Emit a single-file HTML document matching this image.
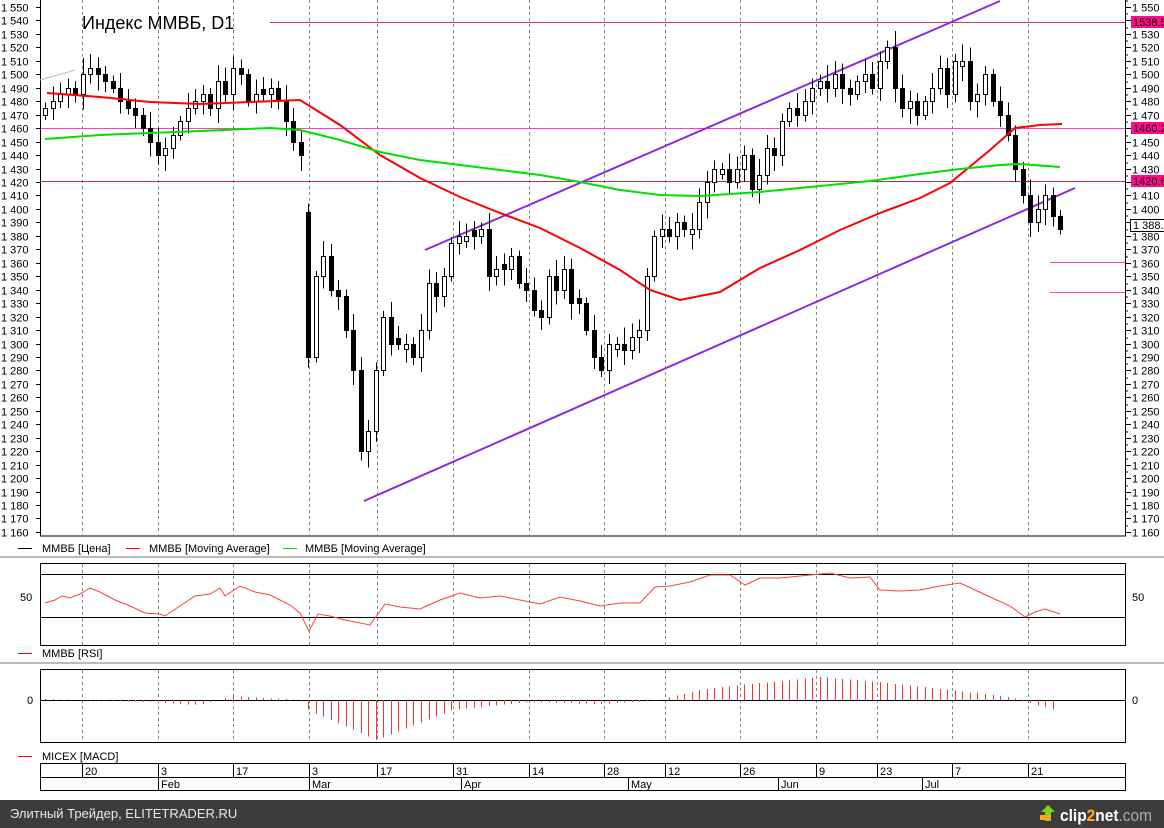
<!DOCTYPE html>
<html><head><meta charset="utf-8">
<style>
html,body{margin:0;padding:0;background:#fff;width:1164px;height:828px;overflow:hidden;font-family:"Liberation Sans",sans-serif}
svg text{font-family:"Liberation Sans","DejaVu Sans",sans-serif}
</style></head>
<body>
<svg id="s" width="1164" height="828" xmlns="http://www.w3.org/2000/svg" shape-rendering="crispEdges">
<rect width="1164" height="828" fill="#fff"/>
<rect x="40.5" y="-1" width="1085" height="537" fill="none" stroke="#000"/>
<g id="grid" stroke="#888" stroke-dasharray="3,3"></g>
<g id="axes" font-size="11" fill="#000"></g>
<line x1="270" y1="22.5" x2="1125" y2="22.5" stroke="#d0306a"/>
<line x1="41" y1="128.5" x2="1125" y2="128.5" stroke="#ff3ec0"/>
<line x1="41" y1="181.5" x2="1125" y2="181.5" stroke="#b03050"/>
<line x1="1050" y1="262.5" x2="1125" y2="262.5" stroke="#ff3ec0"/>
<line x1="1050" y1="292.5" x2="1125" y2="292.5" stroke="#ff3ec0"/>
<line x1="40" y1="80" x2="75" y2="70" stroke="#bbb" shape-rendering="auto"/>
<text x="82" y="29" font-size="18" fill="#000">Индекс ММВБ, D1</text>
<g stroke="#8a2be2" stroke-width="2" shape-rendering="auto">
<line x1="425" y1="250" x2="1000" y2="1"/>
<line x1="364" y1="501" x2="1075" y2="188"/>
</g>
<g id="candles"></g>
<polyline fill="none" stroke="#ff0000" stroke-width="2" shape-rendering="auto" points="47,93 100,97 150,102 200,104 250,102 300,100 340,125 380,155 420,178 460,197 500,213 540,228 580,248 620,270 650,290 680,300 720,292 760,268 800,250 840,230 880,213 920,198 950,183 990,150 1015,128 1040,125 1062,124"/>
<polyline fill="none" stroke="#00e000" stroke-width="2" shape-rendering="auto" points="45,139 100,135 150,133 200,131 270,128 300,130 340,140 380,152 420,160 460,165 500,170 540,175 580,182 620,190 660,195 700,196 760,192 820,186 870,181 920,174 960,169 1000,165 1020,164 1060,167"/>
<rect x="1131" y="16" width="33" height="12" fill="#ff0a8c"/><text x="1133" y="26" font-size="11">1538.5</text>
<rect x="1131" y="122" width="33" height="12" fill="#ff0a8c"/><text x="1133" y="132" font-size="11">1460.2</text>
<rect x="1131" y="175" width="33" height="12" fill="#ff0a8c"/><text x="1133" y="185" font-size="11">1420.6</text>
<rect x="1130.5" y="219.5" width="34" height="12" fill="#fff" stroke="#000"/><text x="1133" y="229" font-size="11">1 388.4</text>
<g font-size="11">
<line x1="18" y1="548.5" x2="32" y2="548.5" stroke="#000"/><text x="42" y="552">ММВБ [Цена]</text>
<line x1="126" y1="548.5" x2="140" y2="548.5" stroke="#f00"/><text x="149" y="552">ММВБ [Moving Average]</text>
<line x1="283" y1="548.5" x2="297" y2="548.5" stroke="#0d0"/><text x="305" y="552">ММВБ [Moving Average]</text>
</g>
<rect x="0" y="556" width="1164" height="2" fill="#bbb"/>
<rect x="40.5" y="563.5" width="1085" height="82" fill="none" stroke="#000"/>
<line x1="41" y1="574.5" x2="1125" y2="574.5" stroke="#000"/>
<line x1="41" y1="617.5" x2="1125" y2="617.5" stroke="#000"/>
<g id="grid2" stroke="#888" stroke-dasharray="3,3"></g>
<text x="20" y="601" font-size="11">50</text><text x="1132" y="601" font-size="11">50</text>
<polyline fill="none" stroke="#ff4040" stroke-width="1" shape-rendering="auto" points="45,603 55,600 62,596 70,598 80,594 90,588 100,592 115,600 130,606 145,613 160,614 165,616 180,606 195,596 210,594 220,588 225,596 240,586 255,592 270,595 290,605 300,613 309,631 318,614 330,616 345,620 370,625 385,604 400,607 420,609 440,600 460,593 480,598 500,596 520,600 540,604 560,597 580,601 600,606 620,603 640,603 655,587 670,586 690,582 710,575 730,575 745,585 760,578 780,578 800,576 830,573 850,578 870,577 880,590 900,591 920,590 940,586 960,583 975,590 990,597 1010,606 1025,617 1035,612 1045,609 1060,614"/>
<line x1="18" y1="653.5" x2="32" y2="653.5" stroke="#f00"/><text x="42" y="657" font-size="11">ММВБ [RSI]</text>
<rect x="0" y="662" width="1164" height="2" fill="#bbb"/>
<rect x="40.5" y="669.5" width="1085" height="73" fill="none" stroke="#000"/>
<g id="grid3" stroke="#888" stroke-dasharray="3,3"></g>
<line x1="41" y1="700.5" x2="1125" y2="700.5" stroke="#000"/>
<g id="macd" stroke="#ff3030"></g>
<text x="27" y="704" font-size="11">0</text><text x="1132" y="704" font-size="11">0</text>
<line x1="18" y1="756.5" x2="32" y2="756.5" stroke="#f00"/><text x="42" y="760" font-size="11">MICEX [MACD]</text>
<rect x="40.5" y="763.5" width="1085" height="27" fill="none" stroke="#000"/>
<line x1="41" y1="777.5" x2="1125" y2="777.5" stroke="#000"/>
<g id="dates" font-size="11"></g>
<rect x="0" y="800" width="1164" height="28" fill="#3c3c3c"/>
<text x="10" y="818" font-size="13" fill="#e8e8e8">Элитный Трейдер, ELITETRADER.RU</text>
<g shape-rendering="auto">
<polygon points="1048,805 1041,812 1045,812 1045,821 1051,821 1051,812 1055,812" fill="#7ed321"/>
<rect x="1040" y="815" width="11" height="5" fill="#f5a623"/>
<text x="1060" y="821" font-size="17" font-weight="bold" fill="#fff" textLength="92" lengthAdjust="spacingAndGlyphs">clip<tspan fill="#ffb020">2</tspan>net<tspan fill="#aaa" font-weight="normal">.com</tspan></text>
</g>
</svg>
<script>
var NS="http://www.w3.org/2000/svg";
function el(p,t,a,txt){var e=document.createElementNS(NS,t);for(var k in a)e.setAttribute(k,a[k]);if(txt!=null)e.textContent=txt;document.getElementById(p).appendChild(e);return e;}
function Y(p){return 7+(1550-p)*1.346;}
for(var p=1550;p>=1160;p-=10){var y=Math.round(Y(p))+0.5;var s=String(p).replace(/^1/,"1 ");
el("axes","line",{x1:1125,y1:y,x2:1131,y2:y,stroke:"#000"});el("axes","line",{x1:36,y1:y,x2:41,y2:y,stroke:"#000"});
el("axes","line",{x1:1125,y1:y-6.7,x2:1128,y2:y-6.7,stroke:"#000"});
if(p!=1540&&p!=1460&&p!=1420&&p!=1390)el("axes","text",{x:1132,y:y+4},s);
el("axes","text",{x:1,y:y+4},s);}
var gx=[82,158,233,309,377,453,529,604,665,740,816,877,952,1028];
gx.forEach(function(x){el("grid","line",{x1:x+.5,y1:0,x2:x+.5,y2:535});el("grid2","line",{x1:x+.5,y1:564,x2:x+.5,y2:645});el("grid3","line",{x1:x+.5,y1:670,x2:x+.5,y2:742});});
var dl=["20","3","17","3","17","31","14","28","12","26","9","23","7","21"];
gx.forEach(function(x,i){el("dates","line",{x1:x+.5,y1:764,x2:x+.5,y2:777,stroke:"#000"});el("dates","text",{x:x+3,y:775},dl[i]);});
[[158,"Feb"],[309,"Mar"],[461,"Apr"],[628,"May"],[778,"Jun"],[922,"Jul"]].forEach(function(m){el("dates","line",{x1:m[0]+.5,y1:778,x2:m[0]+.5,y2:790,stroke:"#000"});el("dates","text",{x:m[0]+3,y:788},m[1]);});
var c=[1475,1480,1485,1490,1485,1500,1505,1500,1495,1490,1480,1475,1470,1460,1450,1440,1445,1455,1465,1475,1480,1485,1475,1495,1485,1505,1500,1480,1485,1485,1490,1480,1465,1450,1440,1290,1350,1365,1340,1335,1310,1280,1220,1235,1280,1320,1300,1300,1300,1290,1310,1345,1335,1350,1375,1380,1380,1380,1385,1350,1355,1355,1365,1345,1340,1325,1320,1350,1340,1355,1330,1330,1310,1290,1280,1300,1300,1295,1305,1310,1350,1380,1385,1380,1390,1385,1385,1405,1420,1430,1430,1420,1430,1440,1415,1425,1445,1440,1465,1475,1470,1480,1490,1495,1490,1500,1490,1485,1495,1500,1490,1510,1520,1490,1475,1480,1470,1480,1490,1505,1485,1510,1510,1480,1485,1500,1480,1470,1455,1430,1410,1390,1400,1410,1395,1385];
var prev=1470;
c.forEach(function(cl,i){var x=Math.round(45+i*7.52);var op=(i==35)?1398:prev;
if(Math.abs(op-cl)<3)op=cl+((i%2)?4:-4);
var hi=Math.max(op,cl)+4+(i*7%9),lo=Math.min(op,cl)-4-(i*5%9);
var yt=Math.round(Y(Math.max(op,cl))),yb=Math.round(Y(Math.min(op,cl)));
el("candles","line",{x1:x+.5,y1:Y(hi),x2:x+.5,y2:Y(lo),stroke:"#000"});
var down=cl<op;
el("candles","rect",{x:x-2+.5,y:yt+.5,width:4,height:Math.max(1,yb-yt),fill:down?"#000":"#fff",stroke:"#000"});
prev=cl;});
var mk=[[45,1],[150,-2],[200,-5],[233,4],[300,0],[309,-10],[377,-40],[453,-10],[530,-2],[600,-4],[660,0],[700,10],[740,15],[820,23],[880,18],[950,10],[1010,3],[1030,-3],[1060,-11]];
function mv(x){for(var i=0;i<mk.length-1;i++){if(x>=mk[i][0]&&x<=mk[i+1][0]){var t=(x-mk[i][0])/(mk[i+1][0]-mk[i][0]);return mk[i][1]+t*(mk[i+1][1]-mk[i][1]);}}return 0;}
for(var i=0;i<c.length;i++){var x=Math.round(45+i*7.52)+.5;var v=mv(x);el("macd","line",{x1:x,y1:700,x2:x,y2:700-v});}
</script>
</body></html>
